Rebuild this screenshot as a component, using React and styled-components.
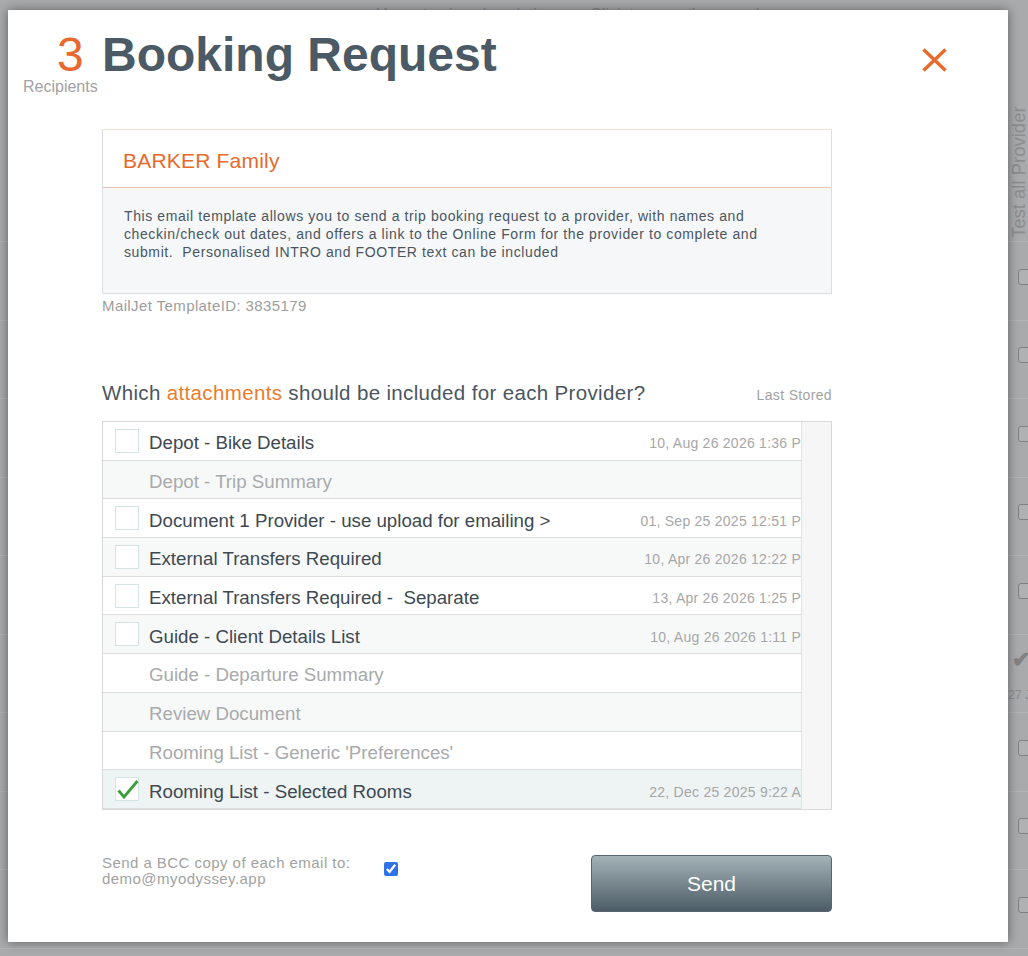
import React from 'react';
import styled, { createGlobalStyle } from 'styled-components';

const GlobalStyle = createGlobalStyle`
  html, body {
    margin: 0;
    padding: 0;
  }
  body {
    font-family: "Liberation Sans", Arial, Helvetica, sans-serif;
  }
`;

const ORANGE = '#e8692e';
const SLATE = '#4b5a64';

const Page = styled.div`
  position: relative;
  width: 1028px;
  height: 956px;
  overflow: hidden;
  background: #a9aaac;
`;

// the dimmed provider table behind the dialog
const Backdrop = styled.div`
  display: flex;
  flex-direction: column;
`;

const BackdropHead = styled.div`
  height: 241px;
  display: flex;
  justify-content: space-between;
  border-bottom: 1px solid #b4b5b7;
`;

const FaintHint = styled.span`
  font-size: 16px;
  line-height: 16px;
  color: #88898b;
  padding: 7px 0 0 376px;
  white-space: pre;
`;

const VerticalLabel = styled.span`
  writing-mode: vertical-rl;
  transform: rotate(180deg);
  font-size: 18.5px;
  line-height: 18px;
  color: #8c8d8f;
  margin-top: 103px;
  height: 135px;
  width: 18px;
  white-space: nowrap;
  align-self: flex-start;
`;

const BackdropRow = styled.div`
  height: 77.5px;
  border-bottom: 1px solid #b4b5b7;
  display: flex;
  align-items: center;
  justify-content: flex-end;
  position: relative;
`;

const BackdropCheck = styled.span`
  width: 14px;
  height: 14px;
  border: 1.5px solid #7f8082;
  border-radius: 3px;
  background: #b0b1b3;
  margin-right: -6px;
  margin-top: -8px;
`;

const BackdropTick = styled.div`
  display: flex;
  flex-direction: column;
  align-items: flex-end;
  color: #808183;
  margin-right: -2px;
  margin-top: 4px;

  b {
    font-size: 22px;
    line-height: 24px;
  }
  span {
    font-size: 12px;
    line-height: 14px;
    margin-top: 16px;
    margin-right: -1px;
    color: #8b8c8e;
  }
`;

const Modal = styled.div`
  position: absolute;
  left: 8px;
  top: 10px;
  width: 1000px;
  height: 932px;
  background: #fff;
  box-shadow: 0 0 10px rgba(0, 0, 0, 0.45);
`;

const Header = styled.div`
  display: flex;
  align-items: flex-start;
  padding: 21px 61px 0 15px;
`;

const CountBlock = styled.div`
  width: 79px;
  display: flex;
  flex-direction: column;
`;

const Count = styled.span`
  font-size: 48px;
  line-height: 48px;
  color: ${ORANGE};
  margin-left: 34px;
`;

const CountLabel = styled.span`
  font-size: 16px;
  line-height: 16px;
  color: #a2a2a2;
`;

const Title = styled.h1`
  margin: 0;
  font-size: 48px;
  line-height: 48px;
  font-weight: bold;
  color: ${SLATE};
`;

const CloseButton = styled.button`
  margin: 17px 0 0 auto;
  padding: 0;
  border: 0;
  background: none;
  width: 25px;
  height: 24px;
  cursor: pointer;
  display: flex;
`;

const Content = styled.div`
  width: 730px;
  margin: 34px 0 0 94px;
`;

const Card = styled.div`
  border: 1px solid #dcdddf;
  border-top-color: #f3e1d4;
`;

const CardHead = styled.div`
  padding: 19px 20px 14px;
  font-size: 21px;
  line-height: 24px;
  letter-spacing: 0.2px;
  color: #e66a2c;
  border-bottom: 1px solid #e8c5af;
`;

const CardBody = styled.p`
  margin: 0;
  padding: 19px 21px 32px;
  background: #f6f7f9;
  font-size: 14px;
  line-height: 18px;
  letter-spacing: 0.6px;
  color: #4a5660;
  white-space: pre-wrap;
`;

const TemplateId = styled.div`
  margin-top: 4px;
  font-size: 15px;
  line-height: 16px;
  letter-spacing: 0.4px;
  color: #9d9d9d;
`;

const QuestionRow = styled.div`
  margin-top: 67px;
  display: flex;
  justify-content: space-between;
  align-items: baseline;
`;

const Question = styled.h2`
  margin: 0;
  font-size: 20.5px;
  line-height: 24px;
  letter-spacing: 0.35px;
  font-weight: normal;
  color: #4a5660;

  em {
    font-style: normal;
    color: #ec7b2c;
  }
`;

const LastStored = styled.span`
  font-size: 14px;
  letter-spacing: 0.35px;
  color: #a2a2a2;
`;

const List = styled.div`
  margin-top: 16px;
  height: 387px;
  border: 1px solid #d9d9d9;
  display: flex;
`;

const Rows = styled.div`
  flex: 1;
  overflow: hidden;
`;

const Row = styled.div`
  height: 37.7px;
  border-bottom: 1px solid #dcdcdc;
  display: flex;
  align-items: center;
  padding-left: 12px;
  overflow: hidden;
  background: ${({ $selected, $shade }) =>
    $selected ? '#eef3f4' : $shade ? '#f7f9f9' : '#fff'};
`;

const CheckSlot = styled.span`
  flex: none;
  width: 24px;
  height: 24px;
  box-sizing: border-box;
  display: flex;
  border: ${({ $visible }) => ($visible ? '1px solid #d4e3e3' : '0')};
  background: ${({ $visible }) => ($visible ? '#fff' : 'transparent')};
`;

const RowName = styled.span`
  margin-left: 10px;
  padding-top: 5px;
  font-size: 18.7px;
  white-space: pre;
  color: ${({ $disabled }) => ($disabled ? '#a8aaab' : '#3e4951')};
`;

const RowDate = styled.span`
  margin: 0 -12px 0 auto;
  padding-top: 5px;
  font-size: 14px;
  letter-spacing: 0.25px;
  color: #a7a7a7;
  white-space: nowrap;
`;

const ScrollTrack = styled.div`
  width: 29px;
  border-left: 1px solid #e2e2e2;
  background: #f6f6f6;
`;

const Footer = styled.div`
  margin-top: 45px;
  display: flex;
  align-items: flex-start;
`;

const BccLabel = styled.label`
  width: 282px;
  font-size: 15px;
  line-height: 16px;
  letter-spacing: 0.45px;
  color: #a2a2a2;
`;

const BccCheck = styled.input`
  margin: 7px 0 0;
  width: 14px;
  height: 14px;
  accent-color: #2f72e6;
`;

const SendButton = styled.button`
  margin-left: auto;
  width: 241px;
  height: 57px;
  border: 1px solid #56656e;
  border-radius: 4px;
  background: linear-gradient(to bottom, #a3b2b6, #4d5d67);
  color: #fff;
  font-family: inherit;
  font-size: 21px;
  cursor: pointer;
`;

const attachments = [
  { name: 'Depot - Bike Details', date: '10, Aug 26 2026 1:36 PM' },
  { name: 'Depot - Trip Summary', disabled: true },
  { name: 'Document 1 Provider - use upload for emailing >', date: '01, Sep 25 2025 12:51 PM' },
  { name: 'External Transfers Required', date: '10, Apr 26 2026 12:22 PM' },
  { name: 'External Transfers Required -  Separate', date: '13, Apr 26 2026 1:25 PM' },
  { name: 'Guide - Client Details List', date: '10, Aug 26 2026 1:11 PM' },
  { name: 'Guide - Departure Summary', disabled: true },
  { name: 'Review Document', disabled: true },
  { name: "Rooming List - Generic 'Preferences'", disabled: true },
  { name: 'Rooming List - Selected Rooms', date: '22, Dec 25 2025 9:22 AM', checked: true },
  { name: 'Rooming List - Summary', disabled: true },
];

const CloseIcon = () => (
  <svg width="25" height="24" viewBox="0 0 25 24">
    <path d="M1.5 1.5 L23.5 22.5 M23.5 1.5 L1.5 22.5" stroke={ORANGE} strokeWidth="3.4" fill="none" />
  </svg>
);

const TickIcon = () => (
  <svg width="24" height="24" viewBox="0 0 24 24" style={{ overflow: 'visible' }}>
    <path d="M2.5 12.5 L8 19 L21.5 3" stroke="#3d9f3a" strokeWidth="2.8" fill="none" />
  </svg>
);

const backdropRows = [0, 1, 2, 3, 4, 5, 6, 7, 8];

export default function App() {
  return (
    <Page>
      <GlobalStyle />
      <Backdrop>
        <BackdropHead>
          <FaintHint>{'Hover to view description        Click to open the record'}</FaintHint>
          <VerticalLabel>Test all Provider</VerticalLabel>
        </BackdropHead>
        {backdropRows.map((i) => (
          <BackdropRow key={i}>
            {i === 5 ? (
              <BackdropTick>
                <b>✔</b>
                <span>27 J</span>
              </BackdropTick>
            ) : (
              <BackdropCheck />
            )}
          </BackdropRow>
        ))}
      </Backdrop>

      <Modal>
        <Header>
          <CountBlock>
            <Count>3</Count>
            <CountLabel>Recipients</CountLabel>
          </CountBlock>
          <Title>Booking Request</Title>
          <CloseButton aria-label="Close">
            <CloseIcon />
          </CloseButton>
        </Header>

        <Content>
          <Card>
            <CardHead>BARKER Family</CardHead>
            <CardBody>
              {'This email template allows you to send a trip booking request to a provider, with names and checkin/check out dates, and offers a link to the Online Form for the provider to complete and submit.  Personalised INTRO and FOOTER text can be included'}
            </CardBody>
          </Card>
          <TemplateId>MailJet TemplateID: 3835179</TemplateId>

          <QuestionRow>
            <Question>
              Which <em>attachments</em> should be included for each Provider?
            </Question>
            <LastStored>Last Stored</LastStored>
          </QuestionRow>

          <List>
            <Rows>
              {attachments.map((a, i) => (
                <Row key={a.name} $shade={i % 2 === 1} $selected={a.checked}>
                  <CheckSlot $visible={!a.disabled}>{a.checked && <TickIcon />}</CheckSlot>
                  <RowName $disabled={a.disabled}>{a.name}</RowName>
                  {a.date && <RowDate>{a.date}</RowDate>}
                </Row>
              ))}
            </Rows>
            <ScrollTrack />
          </List>

          <Footer>
            <BccLabel htmlFor="bcc">
              Send a BCC copy of each email to:
              <br />
              demo@myodyssey.app
            </BccLabel>
            <BccCheck id="bcc" type="checkbox" defaultChecked />
            <SendButton>Send</SendButton>
          </Footer>
        </Content>
      </Modal>
    </Page>
  );
}
